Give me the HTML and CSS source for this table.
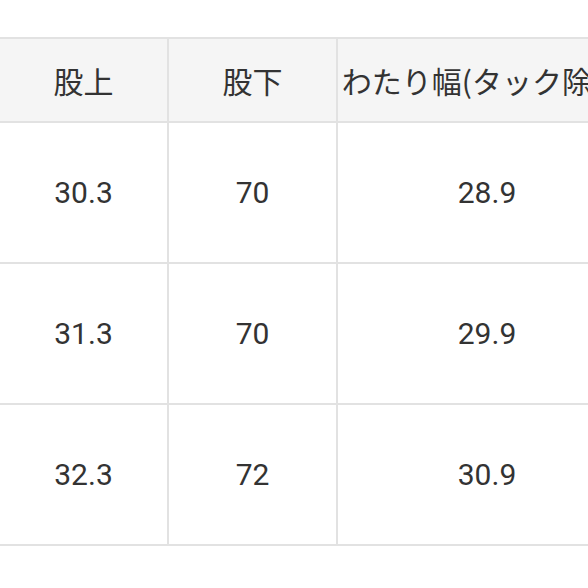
FILE: index.html
```html
<!DOCTYPE html>
<html lang="ja">
<head>
<meta charset="utf-8">
<link rel="stylesheet" href="styles.css">
</head>
<body>
<div class="wrap">
<table class="size">
<thead>
<tr><th>股上</th><th>股下</th><th>わたり幅(タック除く)</th></tr>
</thead>
<tbody>
<tr><td>30.3</td><td>70</td><td>28.9</td></tr>
<tr><td>31.3</td><td>70</td><td>29.9</td></tr>
<tr><td>32.3</td><td>72</td><td>30.9</td></tr>
</tbody>
</table>
</div>
</body>
</html>
```
FILE: styles.css
```css
html, body {
  margin: 0;
  padding: 0;
  background: #ffffff;
  overflow: hidden;
}
.wrap {
  width: 588px;
  height: 588px;
  overflow: hidden;
  padding-top: 37px;
  box-sizing: border-box;
}
.size {
  border-collapse: collapse;
  table-layout: fixed;
  margin-left: -2px;
  width: 640px;
  color: #333333;
}
.size th, .size td {
  border: 2px solid #e2e2e2;
  text-align: center;
  white-space: nowrap;
  overflow: visible;
  padding: 0;
}
.size th:nth-child(1) { width: 167px; }
.size th:nth-child(2) { width: 167px; }
.size th {
  background: #f5f5f5;
  height: 82px;
  font-family: "Noto Sans CJK JP", sans-serif;
  font-weight: 400;
  font-size: 30px;
}
.size td {
  height: 139px;
  font-family: "Roboto", "Noto Sans", sans-serif;
  font-size: 30px;
}
```
